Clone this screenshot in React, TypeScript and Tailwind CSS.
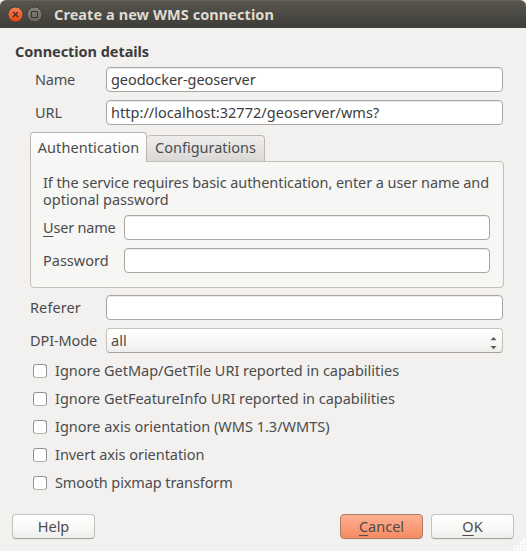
import type { ReactNode } from "react";

const field =
  "h-[25px] rounded-[4px] border border-[#a9a6a1] bg-white px-1 pb-[2px] text-[#3c3c3c] outline-none shadow-[inset_0_1px_0_#ececea]";

function Field({ label, value, className = "" }: { label: string; value: string; className?: string }) {
  return (
    <input
      aria-label={label}
      defaultValue={value}
      className={`${field} min-w-0 flex-1 ${className}`}
    />
  );
}

function Row({ label, labelClass, children }: { label: ReactNode; labelClass: string; children: ReactNode }) {
  return (
    <div className="flex h-[25px] items-center">
      <div className={`shrink-0 whitespace-nowrap ${labelClass}`}>{label}</div>
      {children}
    </div>
  );
}

function Mnemonic({ children }: { children: string }) {
  return <span className="underline decoration-1 underline-offset-[3px] [text-decoration-skip-ink:none]">{children}</span>;
}

const options = [
  { text: "Ignore GetMap/GetTile URI reported in capabilities", spacing: "tracking-[-0.02px]" },
  { text: "Ignore GetFeatureInfo URI reported in capabilities", spacing: "tracking-[-0.03px]" },
  { text: "Ignore axis orientation (WMS 1.3/WMTS)", spacing: "tracking-[0px]" },
  { text: "Invert axis orientation", spacing: "tracking-[-0.04px]" },
  { text: "Smooth pixmap transform", spacing: "tracking-[-0.1px]" },
];

const button = "flex h-[25px] w-[83px] items-center justify-center rounded-[4px] border shadow-[0_1px_0_#e8e7e5]";
const plain = "border-[#c4c1bd] border-b-[#a5a29d] bg-linear-to-b from-white via-[#f9f9f8] to-[#ededeb]";

export default function App() {
  return (
    <div className="flex h-[551px] w-[526px] flex-col overflow-hidden bg-[#f2f1f0] font-['Noto_Sans','Open_Sans',sans-serif] text-[14.5px] leading-[17px] text-[#4c4c4c]">
      <header className="flex h-7 shrink-0 items-center rounded-t-[6px] border-t border-[#65635b] bg-linear-to-b from-[#57554d] to-[#3e3d39] pl-[7px]">
        <svg width="36" height="18" viewBox="0 0 36 18" fill="none">
          <defs>
            <linearGradient id="close" x2="0" y2="1">
              <stop stopColor="#f5825c" />
              <stop offset="1" stopColor="#dd4814" />
            </linearGradient>
            <linearGradient id="maximize" x2="0" y2="1">
              <stop stopColor="#85837b" />
              <stop offset="1" stopColor="#66645d" />
            </linearGradient>
          </defs>
          <circle cx="8.5" cy="8.5" r="7.6" fill="url(#close)" stroke="#393832" />
          <path d="M6 6l5 5m0-5l-5 5" stroke="#3c2a20" strokeWidth="1.2" />
          <circle cx="27.5" cy="8.5" r="7.6" fill="url(#maximize)" stroke="#393832" />
          <path d="M24.5 5.5h6v6h-6z" stroke="#35342f" />
        </svg>
        <h1 className="ml-[11px] whitespace-nowrap font-bold tracking-[0.07px] text-[#dfdbd2]">Create a new WMS connection</h1>
      </header>

      <main className="flex flex-col px-3">
        <h2 className="mt-[15px] ml-[3px] h-[17px] font-bold tracking-[-0.05px] text-[#3c3c3c]">Connection details</h2>
        <div className="mt-[7px] mr-[11px] ml-[18px] flex flex-col gap-2">
          <Row label="Name" labelClass="w-[76px] pl-[5px] tracking-[-0.2px]">
            <Field label="Name" value="geodocker-geoserver" className="tracking-[-0.05px]" />
          </Row>
          <Row label="URL" labelClass="w-[76px] pl-[5px]">
            <Field label="URL" value="http://localhost:32772/geoserver/wms?" className="tracking-[0.03px]" />
          </Row>
        </div>

        <section className="mt-[7px] mr-[10px] ml-[18px]">
          <div className="flex h-[29px] items-end">
            <div className="z-10 -mb-px flex h-[30px] w-[117px] items-center justify-center rounded-t-[4px] border border-b-0 border-[#b9b6b2] bg-linear-to-b from-white to-[#f6f6f5] pb-px tracking-[0.1px]">
              Authentication
            </div>
            <div className="flex h-[26px] w-[118px] items-center justify-center rounded-t-[4px] border border-b-0 border-l-0 border-[#bdbab6] bg-linear-to-b from-[#efeeed] to-[#dad9d6] pb-[2px]">
              Configurations
            </div>
          </div>
          <div className="h-[127px] rounded-[4px] rounded-tl-none border border-[#c3bfbb] bg-[#f6f6f5] pr-[13px] pl-3">
            <div className="mt-3 h-[34px] whitespace-nowrap">
              <p className="h-[17px] tracking-[-0.075px]">If the service requires basic authentication, enter a user name and</p>
              <p className="h-[17px]">optional password</p>
            </div>
            <div className="mt-[7px] flex flex-col gap-2">
              <Row label={<><Mnemonic>U</Mnemonic>ser name</>} labelClass="w-[81px] tracking-[-0.2px]">
                <Field label="User name" value="" />
              </Row>
              <Row label="Password" labelClass="w-[81px]">
                <Field label="Password" value="" />
              </Row>
            </div>
          </div>
        </section>

        <div className="mt-[7px] mr-[11px] ml-[18px] flex flex-col gap-2">
          <Row label="Referer" labelClass="w-[76px] tracking-[0.1px]">
            <Field label="Referer" value="" />
          </Row>
          <Row label="DPI-Mode" labelClass="w-[76px] tracking-[-0.1px]">
            <div className={`flex h-[25px] flex-1 items-center justify-between rounded-[4px] border px-1 ${plain}`}>
              <span>all</span>
              <svg className="mt-[5px] mr-[1px]" width="7" height="13" viewBox="0 0 7 13" fill="#5c5b58">
                <path d="M3.5 0L6.5 3.2h-6zM3.5 12.2L0.5 9h6z" />
              </svg>
            </div>
          </Row>
        </div>

        <div className="mt-[11px] ml-[21px] flex flex-col gap-[14px]">
          {options.map((o) => (
            <label key={o.text} className={`flex h-[14px] items-center whitespace-nowrap ${o.spacing}`}>
              <input
                type="checkbox"
                className="mr-2 size-[14px] appearance-none rounded-[3px] border border-[#96938f] border-b-[#b3b0ac] bg-white"
              />
              <span className="-mt-[2px]">{o.text}</span>
            </label>
          ))}
        </div>
      </main>

      <footer className="mt-6 flex gap-2 px-3">
        <button className={`${button} ${plain} mr-auto`}>Help</button>
        <button className={`${button} border-[#ad7b67] bg-linear-to-b from-[#ffb093] to-[#f58b62]`}>
          <span><Mnemonic>C</Mnemonic>ancel</span>
        </button>
        <button className={`${button} ${plain}`}>
          <span><Mnemonic>O</Mnemonic>K</span>
        </button>
      </footer>
      <svg className="mb-px ml-auto shrink-0" width="12" height="12" fill="#fff">
        <path d="M9 0h2v2H9zM6 3h2v2H6zM9 3h2v2H9zM3 6h2v2H3zM6 6h2v2H6zM9 6h2v2H9zM0 9h2v2H0zM3 9h2v2H3zM6 9h2v2H6zM9 9h2v2H9z" />
      </svg>
    </div>
  );
}
